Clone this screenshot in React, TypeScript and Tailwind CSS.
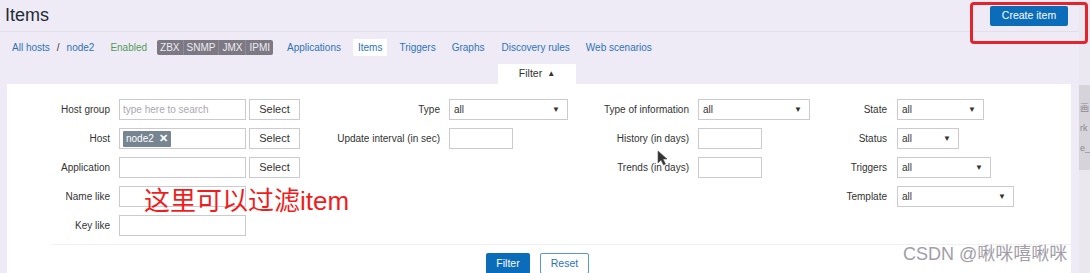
import React from "react";

const font = { fontFamily: '"Liberation Sans", Arial, "Noto Sans CJK SC", sans-serif' };

function Label({ text, w, pr = "pr-[9px]" }: { text: string; w: string; pr?: string }) {
  return <div className={`${w} ${pr} shrink-0 text-right text-[10px] text-[#333]`}>{text}</div>;
}

function Input({ w, children }: { w: string; children?: React.ReactNode }) {
  return (
    <div className={`${w} h-[21px] shrink-0 border border-[#cdc9d3] bg-white flex items-center px-[3px]`}>
      {children}
    </div>
  );
}

function Dropdown({ w }: { w: string }) {
  return (
    <div className={`${w} h-[21px] shrink-0 border border-[#cdc9d3] bg-white flex items-center justify-between pl-[4px] pr-[7px] text-[10px] text-[#333]`}>
      <span>all</span>
      <span className="text-[8px]">▼</span>
    </div>
  );
}

function SelectBtn() {
  return (
    <div className="ml-[3px] w-[51px] h-[21px] shrink-0 border border-[#cdc9d3] bg-white flex items-center justify-center text-[11px] text-[#333]">
      Select
    </div>
  );
}

function Row({ children }: { children: React.ReactNode }) {
  return <div className="flex h-[29px] items-center">{children}</div>;
}

export default function App() {
  return (
    <div className="relative flex w-[1090px] h-[273px] overflow-hidden bg-[#efebf6]" style={font}>
      <div className="flex w-[1079px] flex-col">
        {/* header */}
        <div className="flex h-[32px] shrink-0 items-center justify-between border-b border-[#e3dfe9] pl-[5px] pr-[11px]">
          <h1 className="text-[18px] text-[#1f2c33]">Items</h1>
          <button className="h-[20px] w-[78px] rounded-[2px] bg-[#0b6cb9] text-[10.5px] text-white">Create item</button>
        </div>

        {/* nav */}
        <div className="mt-[5px] flex h-[20px] shrink-0 items-center pl-[12px] text-[10px] text-[#2d73b8]">
          <span>All hosts</span>
          <span className="ml-[7px] text-[#333]">/</span>
          <span className="ml-[7px]">node2</span>
          <span className="ml-[16px] text-[#4f9a5b]">Enabled</span>
          <div className="ml-[10px] flex h-[15px] items-center rounded-[2px] bg-[#7c7984] text-[10px] text-[#ececf0]">
            <span className="px-[3px]">ZBX</span>
            <span className="border-l border-[#8f8c97] px-[3px]">SNMP</span>
            <span className="border-l border-[#8f8c97] px-[3px]">JMX</span>
            <span className="border-l border-[#8f8c97] px-[3px]">IPMI</span>
          </div>
          <span className="ml-[14px]">Applications</span>
          <span className="ml-[12px] flex h-[17px] items-center bg-white px-[5px]">Items</span>
          <span className="ml-[12px]">Triggers</span>
          <span className="ml-[16px]">Graphs</span>
          <span className="ml-[17px]">Discovery rules</span>
          <span className="ml-[16px]">Web scenarios</span>
        </div>

        {/* filter tab */}
        <div className="mt-[7px] flex h-[20px] shrink-0">
          <div className="ml-[498px] flex w-[78px] items-center justify-center gap-[5px] bg-white text-[10.5px] text-[#333]">
            Filter <span className="text-[8px]">▲</span>
          </div>
        </div>

        {/* panel */}
        <div className="ml-[7px] w-[1064px] flex-1 bg-white pt-[11px]">
          <Row>
            <Label text="Host group" w="w-[112px]" />
            <Input w="w-[127px]">
              <span className="text-[10px] text-[#aaa6b0]">type here to search</span>
            </Input>
            <SelectBtn />
            <Label text="Type" w="w-[149px]" />
            <Dropdown w="w-[119px]" />
            <Label text="Type of information" w="w-[130px]" />
            <Dropdown w="w-[112px]" />
            <Label text="State" w="w-[87px]" pr="pr-[10px]" />
            <Dropdown w="w-[87px]" />
          </Row>
          <Row>
            <Label text="Host" w="w-[112px]" />
            <Input w="w-[127px]">
              <span className="flex h-[16px] items-center gap-[5px] rounded-[1px] bg-[#768592] px-[3px] text-[10px] text-white">
                node2 <span className="text-[11px] font-bold">✕</span>
              </span>
            </Input>
            <SelectBtn />
            <Label text="Update interval (in sec)" w="w-[149px]" />
            <Input w="w-[64px]" />
            <div className="w-[55px] shrink-0" />
            <Label text="History (in days)" w="w-[130px]" />
            <Input w="w-[64px]" />
            <div className="w-[48px] shrink-0" />
            <Label text="Status" w="w-[87px]" pr="pr-[10px]" />
            <Dropdown w="w-[62px]" />
          </Row>
          <Row>
            <Label text="Application" w="w-[112px]" />
            <Input w="w-[127px]" />
            <SelectBtn />
            <div className="w-[268px] shrink-0" />
            <Label text="Trends (in days)" w="w-[130px]" />
            <Input w="w-[64px]" />
            <div className="w-[48px] shrink-0" />
            <Label text="Triggers" w="w-[87px]" pr="pr-[10px]" />
            <Dropdown w="w-[94px]" />
          </Row>
          <Row>
            <Label text="Name like" w="w-[112px]" />
            <Input w="w-[127px]" />
            <div className="w-[564px] shrink-0" />
            <Label text="Template" w="w-[87px]" pr="pr-[10px]" />
            <Dropdown w="w-[117px]" />
          </Row>
          <Row>
            <Label text="Key like" w="w-[112px]" />
            <Input w="w-[127px]" />
          </Row>

          <div className="ml-[45px] mt-[4px] flex border-t border-[#f1eef6] pt-[8px]">
            <div className="ml-[434px] flex gap-[10px]">
              <button className="h-[21px] w-[44px] rounded-[2px] bg-[#0b6cb9] text-[10.5px] text-white">Filter</button>
              <button className="h-[21px] w-[49px] rounded-[2px] border border-[#5d95cc] bg-white text-[10.5px] text-[#2d73b8]">Reset</button>
            </div>
          </div>
        </div>
      </div>

      {/* neighbouring window edge */}
      <div className="flex w-[11px] flex-col overflow-hidden">
        <div className="h-[85px] bg-[#ece8f1]" />
        <div className="flex h-[85px] flex-col justify-center gap-[8px] bg-[#d6d3da] pl-[1px] text-[9px] leading-[12px] text-[#8b8891]">
          <span>画</span>
          <span>rk</span>
          <span>e_</span>
        </div>
        <div className="flex-1 bg-[#ebe7ef]" />
      </div>

      {/* annotations */}
      <div className="absolute left-[970px] top-[2px] h-[42px] w-[118px] rounded-[4px] border-[3px] border-[#e5232b]" />
      <div className="absolute left-[144px] top-[186px] text-[26px] leading-[30px] text-[#f01d1d]">这里可以过滤item</div>
      <div className="absolute left-[903px] top-[243px] text-[18px] leading-[22px] text-[#a19ea7]">CSDN @啾咪嘻啾咪</div>
      <svg className="absolute left-[657px] top-[150px]" width="12" height="16" viewBox="0 0 12 16">
        <path d="M1 1 L1 13 L4 10 L6.5 15 L8.5 14 L6 9 L10 9 Z" fill="#333" stroke="#555" strokeWidth="0.6" />
      </svg>
    </div>
  );
}
